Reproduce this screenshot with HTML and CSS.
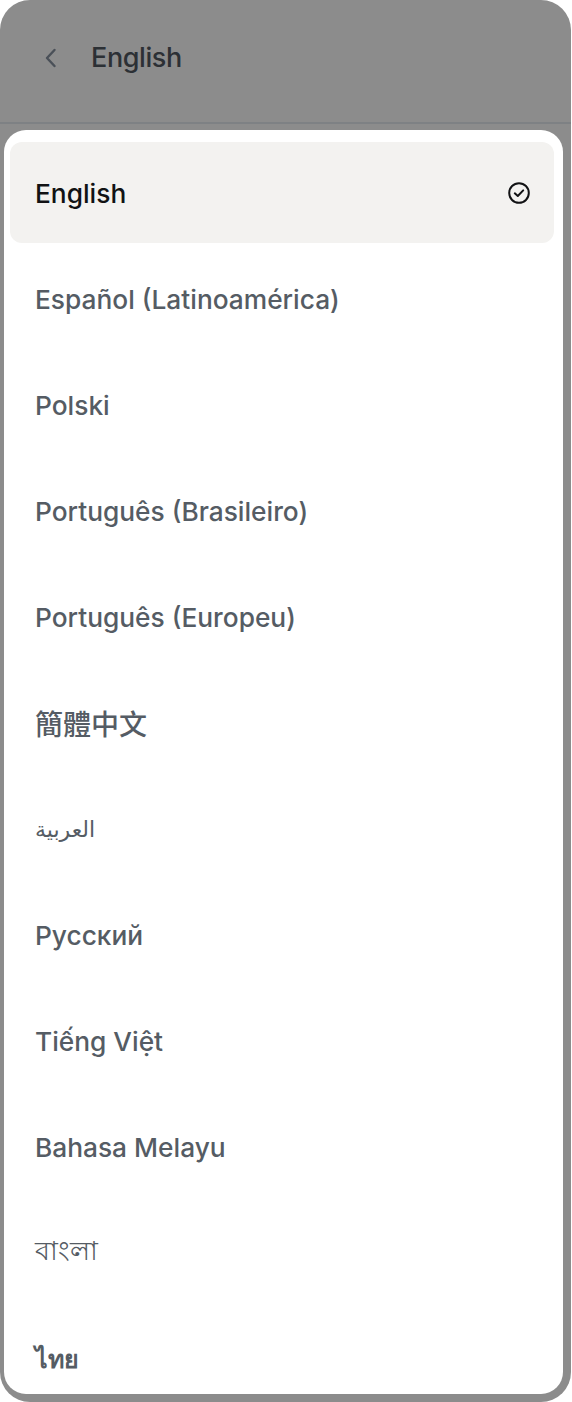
FILE: index.html
```html
<!DOCTYPE html>
<html lang="en">
<head>
<meta charset="utf-8">
<title>Language</title>
<link rel="stylesheet" href="styles.css">
</head>
<body>
<div class="sheet">
  <header class="topbar">
    <svg class="back" width="16" height="22" viewBox="0 0 16 22" aria-hidden="true">
      <path d="M12.5 3 L5 11 L12.5 19" fill="none" stroke="currentColor" stroke-width="2.4" stroke-linecap="round" stroke-linejoin="round"/>
    </svg>
    <span class="title">English</span>
  </header>
  <div class="panel">
    <ul class="list">
      <li class="item selected">
        <span class="label">English</span>
        <svg class="check" width="24" height="24" viewBox="0 0 24 24" aria-hidden="true">
          <circle cx="12" cy="12" r="9.8" fill="none" stroke="currentColor" stroke-width="2"/>
          <path d="M7.8 12.3 L10.8 15 L16.2 9.4" fill="none" stroke="currentColor" stroke-width="2" stroke-linecap="round" stroke-linejoin="round"/>
        </svg>
      </li>
      <li class="item"><span class="label">Español (Latinoamérica)</span></li>
      <li class="item"><span class="label">Polski</span></li>
      <li class="item"><span class="label">Português (Brasileiro)</span></li>
      <li class="item"><span class="label">Português (Europeu)</span></li>
      <li class="item"><span class="label cjk" lang="zh-Hant">簡體中文</span></li>
      <li class="item"><span class="label arabic" lang="ar">العربية</span></li>
      <li class="item"><span class="label">Русский</span></li>
      <li class="item"><span class="label">Tiếng Việt</span></li>
      <li class="item"><span class="label">Bahasa Melayu</span></li>
      <li class="item"><span class="label bangla" lang="bn">বাংলা</span></li>
      <li class="item"><span class="label thai" lang="th">ไทย</span></li>
    </ul>
  </div>
</div>
</body>
</html>
```
FILE: styles.css
```css
html, body {
  margin: 0;
  padding: 0;
  background: #ffffff;
}

body {
  font-family: Inter, "Noto Sans", "DejaVu Sans", sans-serif;
}

.sheet {
  width: 571px;
  height: 1402px;
  background: #8c8c8c;
  border-radius: 30px;
  overflow: hidden;
  display: flex;
  flex-direction: column;
}

.topbar {
  height: 124px;
  flex: none;
  box-sizing: border-box;
  border-bottom: 2px solid #7e8184;
  display: flex;
  align-items: flex-start;
  padding: 38px 0 0 42px;
  gap: 33px;
  color: #2c3035;
}

.back {
  color: #4a5058;
  margin-top: 9px;
}

.title {
  font-size: 27px;
  font-weight: 500;
  line-height: 40px;
  letter-spacing: -0.4px;
}

.panel {
  flex: 1;
  min-height: 0;
  margin: 6px 8px 8px 4px;
  background: #ffffff;
  border-radius: 22px;
  overflow: hidden;
  padding: 12px 9px 0 6px;
}

.list {
  list-style: none;
  margin: 0;
  padding: 0;
  display: flex;
  flex-direction: column;
  gap: 5px;
}

.item {
  height: 101px;
  flex: none;
  box-sizing: border-box;
  border-radius: 12px;
  display: flex;
  align-items: center;
  justify-content: space-between;
  padding: 1px 23px 0 25px;
  color: #555c64;
}

.item.selected {
  background: #f3f2f0;
  color: #111214;
}

.label {
  font-size: 26.3px;
  font-weight: 500;
  letter-spacing: 0;
}

.check {
  color: #111214;
}

.cjk {
  font-family: "Noto Sans CJK TC", "Noto Sans CJK SC", sans-serif;
  font-size: 28px;
  font-weight: 500;
}

.arabic {
  font-family: "DejaVu Sans", "Noto Sans", sans-serif;
  font-size: 22px;
  font-weight: 400;
}

.bangla {
  font-family: "Noto Sans", "DejaVu Sans", sans-serif;
  font-size: 26.5px;
  font-weight: 400;
}

.thai {
  font-family: "Noto Sans", "DejaVu Sans", sans-serif;
  font-size: 25px;
  font-weight: 700;
}
```
